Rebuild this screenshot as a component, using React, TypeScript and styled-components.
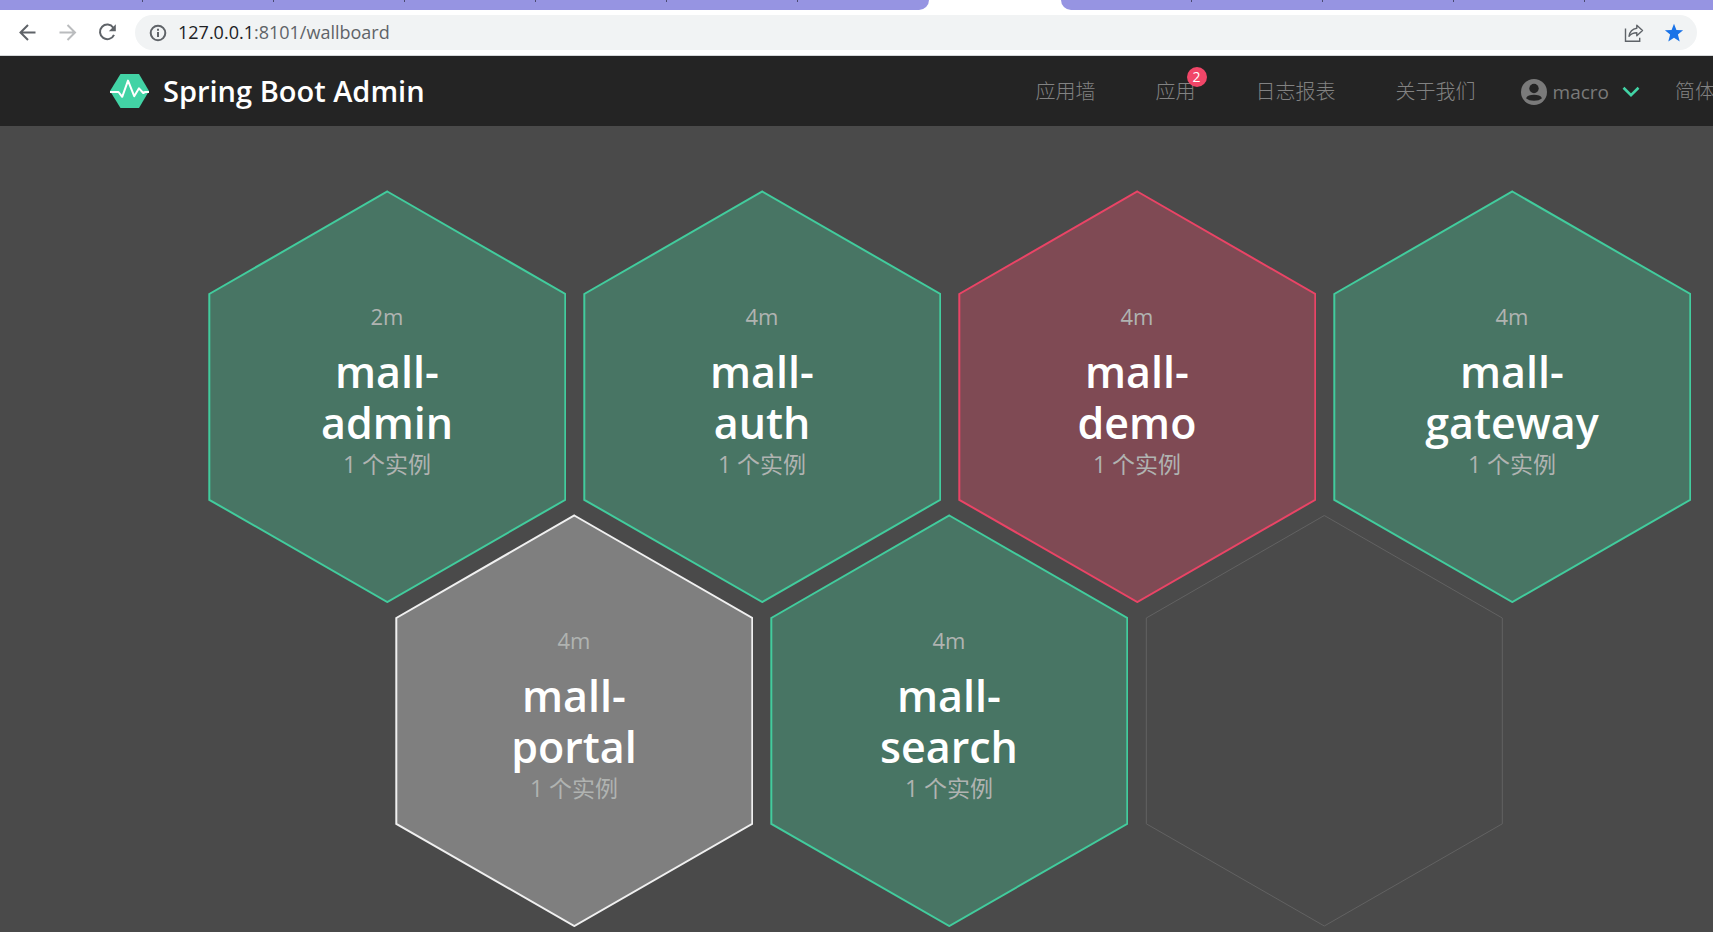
import React from "react";
import styled, { createGlobalStyle } from "styled-components";

const GlobalStyle = createGlobalStyle`
  *, *::before, *::after { box-sizing: border-box; }
  html, body, #root { min-height: 100vh; }
  body {
    margin: 0;
    background: #4a4a4a;
    font-family: "Open Sans", "Noto Sans CJK SC", sans-serif;
    overflow: hidden;
  }
  a { color: inherit; text-decoration: none; }
  button { border: 0; padding: 0; background: none; font: inherit; color: inherit; cursor: pointer; }
`;

const Page = styled.div`
  display: flex;
  flex-direction: column;
  min-height: 100vh;
  overflow: hidden;
`;

/* Browser chrome */
const TabStrip = styled.div`
  display: flex;
  height: 10px;
  background: #fff;
`;

const TabGroup = styled.div<{ $side: "left" | "right" }>`
  display: flex;
  overflow: hidden;
  background: #9694e2;
  flex: ${(p) => (p.$side === "left" ? "0 0 929px" : "1 1 0")};
  justify-content: ${(p) => (p.$side === "left" ? "flex-end" : "flex-start")};
  border-radius: ${(p) => (p.$side === "left" ? "0 0 10px 0" : "0 0 0 10px")};
`;

const ActiveTab = styled.div`
  flex: 0 0 132px;
`;

const Tab = styled.div<{ $divider: boolean }>`
  flex: 0 0 131px;
  height: 2px;
  border-right: 1px solid ${(p) => (p.$divider ? "#4b4a72" : "transparent")};
`;

const Toolbar = styled.div`
  display: flex;
  align-items: center;
  height: 46px;
  padding: 0 16px 0 15px;
  background: #fff;
  border-bottom: 1px solid #d5d8da;
`;

const ToolButton = styled.button<{ $muted?: boolean }>`
  display: flex;
  width: 24px;
  height: 24px;
  margin-right: 16px;
  color: ${(p) => (p.$muted ? "#babcbe" : "#5f6368")};
`;

const AddressBar = styled.div`
  display: flex;
  align-items: center;
  flex: 1;
  height: 35px;
  padding: 0 11px 0 14px;
  border-radius: 18px;
  background: #f1f3f4;
`;

const Address = styled.div`
  flex: 1;
  margin-left: 11px;
  padding-bottom: 2px;
  font-size: 18px;
  line-height: 24px;
  color: #5f6368;
`;

const Host = styled.span`
  color: #202124;
`;

const BarButton = styled.button`
  display: flex;
  margin-left: 16px;
  color: #5f6368;
`;

/* Application header */
const Header = styled.header`
  display: flex;
  align-items: center;
  height: 70px;
  padding-left: 110px;
  background: #242424;
`;

const Brand = styled.a`
  display: flex;
  align-items: center;
  gap: 14px;
  color: #fff;
  font-size: 29px;
  font-weight: 600;
  line-height: 40px;
  white-space: nowrap;
`;

const Nav = styled.nav`
  display: flex;
  align-items: center;
  margin-left: auto;
  padding-top: 2px;
  color: #828282;
  font-size: 20px;
  line-height: 30px;
  font-weight: 300;
  white-space: nowrap;
`;

const NavLink = styled.a`
  position: relative;
  margin-right: 60px;
`;

const Badge = styled.span`
  position: absolute;
  top: -10px;
  right: -11px;
  width: 20px;
  height: 20px;
  border-radius: 50%;
  background: #f14668;
  color: #fff;
  font-size: 14px;
  font-weight: 400;
  line-height: 20px;
  text-align: center;
`;

const UserMenu = styled.button`
  display: flex;
  align-items: center;
  gap: 6px;
  margin: 0 35px 0 -15px;
  color: #7a7a7a;
  font-size: 19px;
  font-weight: 400;
`;

const Chevron = styled.svg`
  margin-left: 7px;
`;

const Language = styled.a`
  width: 38px;
`;

/* Wallboard */
const Wallboard = styled.main`
  flex: 1;
  padding: 64px 0 0 208px;
`;

const HexRow = styled.div<{ $shifted?: boolean }>`
  display: flex;
  gap: 17px;
  margin-top: ${(p) => (p.$shifted ? "-89px" : "0")};
  padding-left: ${(p) => (p.$shifted ? "187px" : "0")};
`;

const Hex = styled.div`
  display: grid;
  flex: 0 0 358px;
  height: 413px;
  > * { grid-area: 1 / 1; }
`;

const HexLink = styled.a`
  display: flex;
  flex-direction: column;
  align-items: center;
  padding-top: 110px;
  text-align: center;
  color: #b0b3b1;
`;

const Uptime = styled.span`
  font-size: 22px;
  line-height: 32px;
`;

const AppName = styled.h2`
  width: 200px;
  margin: 14px 0 0;
  color: #fff;
  font-size: 43px;
  font-weight: 600;
  line-height: 51px;
`;

const Instances = styled.span`
  font-size: 23px;
  line-height: 32px;
  font-weight: 400;
`;

type Status = "up" | "down" | "unknown" | "empty";

const hexColors: Record<Status, { fill: string; stroke: string; width: number }> = {
  up: { fill: "#487564", stroke: "#42cc9d", width: 2 },
  down: { fill: "#7f4a54", stroke: "#ea4466", width: 2 },
  unknown: { fill: "#7f7f7f", stroke: "#f0f0f0", width: 2 },
  empty: { fill: "none", stroke: "#626262", width: 1 },
};

const HexShape = ({ status }: { status: Status }) => {
  const c = hexColors[status];
  return (
    <svg width="358" height="413" viewBox="0 0 358 413" aria-hidden="true">
      <polygon
        points="179.3,1.5 357.3,104 357.3,309.800 179.3,412 1.3,309.800 1.3,104"
        fill={c.fill}
        stroke={c.stroke}
        strokeWidth={c.width}
      />
    </svg>
  );
};

interface AppEntry {
  name?: string;
  uptime?: string;
  status: Status;
}

const rows: AppEntry[][] = [
  [
    { name: "admin", uptime: "2m", status: "up" },
    { name: "auth", uptime: "4m", status: "up" },
    { name: "demo", uptime: "4m", status: "down" },
    { name: "gateway", uptime: "4m", status: "up" },
  ],
  [
    { name: "portal", uptime: "4m", status: "unknown" },
    { name: "search", uptime: "4m", status: "up" },
    { status: "empty" },
  ],
];

const HexTile = ({ name, uptime, status }: AppEntry) => (
  <Hex>
    <HexShape status={status} />
    {name && (
      <HexLink href={`#mall-${name}`}>
        <Uptime>{uptime}</Uptime>
        <AppName>
          mall-
          <br />
          {name}
        </AppName>
        <Instances>1 个实例</Instances>
      </HexLink>
    )}
  </Hex>
);

const Arrow = ({ back }: { back?: boolean }) => (
  <svg width="24" height="24" viewBox="0 0 24 24" fill="none" stroke="currentColor" strokeWidth="2">
    <path d={back ? "M20.500 11.500H6M13 4 5.500 11.500l7.500 7.500" : "M4.500 11.500H19M12.500 4 20 11.500l-7.500 7.500"} />
  </svg>
);

export default function App() {
  return (
    <Page>
      <GlobalStyle />
      <TabStrip>
        <TabGroup $side="left">
          {[0, 1, 2, 3, 4, 5, 6].map((i) => (
            <Tab key={i} $divider={i < 6} />
          ))}
        </TabGroup>
        <ActiveTab />
        <TabGroup $side="right">
          {[0, 1, 2, 3].map((i) => (
            <Tab key={i} $divider />
          ))}
        </TabGroup>
      </TabStrip>
      <Toolbar>
        <ToolButton aria-label="Back">
          <Arrow back />
        </ToolButton>
        <ToolButton aria-label="Forward" $muted>
          <Arrow />
        </ToolButton>
        <ToolButton aria-label="Reload">
          <svg width="24" height="24" viewBox="0 0 24 24" fill="none">
            <path d="M18.300 6.700A7.300 7.300 0 1 0 19 13.800" stroke="currentColor" strokeWidth="2" />
            <path d="M20.800 3.300v7h-7z" fill="currentColor" />
          </svg>
        </ToolButton>
        <AddressBar>
          <svg width="18" height="18" viewBox="0 0 18 18" fill="none" stroke="#5f6368" strokeWidth="2">
            <circle cx="9" cy="9" r="7.300" />
            <path d="M9 8v5M9 4.800v2" />
          </svg>
          <Address>
            <Host>127.0.0.1</Host>:8101/wallboard
          </Address>
          <BarButton aria-label="Share">
            <svg width="24" height="24" viewBox="0 0 24 24" fill="none" stroke="currentColor" strokeWidth="1.400">
              <path d="M3.500 7.500v12.800h14.200v-3.500" />
              <path d="M14.800 4.200 20.500 9.500l-5.700 5.200v-3c-3.500 0-5.800 1-7.800 3.600.7-4.600 3.300-7.500 7.800-8.100z" strokeLinejoin="round" />
            </svg>
          </BarButton>
          <BarButton aria-label="Bookmark">
            <svg width="24" height="24" viewBox="0 0 24 24" fill="#1a73e8">
              <path d="m12 2.700 2.400 6.200 6.700.4-5.200 4.200 1.800 6.900-5.700-3.700-5.700 3.700 1.800-6.900L2.900 9.300l6.700-.4z" />
            </svg>
          </BarButton>
        </AddressBar>
      </Toolbar>
      <Header>
        <Brand href="#home">
          <svg width="39" height="34" viewBox="0 0 39 34" aria-hidden="true">
            <path d="M10.500 0h18.500L39 17 29 34H10.500L0 17z" fill="#42d3a5" />
            <path
              d="M0 18h8.500l3.700 4.800L18 6.600l6.200 15.600 4.800-7.900 4.200 4.700 2-1H39"
              fill="none"
              stroke="#fff"
              strokeWidth="2"
              strokeLinejoin="round"
            />
          </svg>
          <span>Spring Boot Admin</span>
        </Brand>
        <Nav>
          <NavLink href="#wallboard">应用墙</NavLink>
          <NavLink href="#applications">
            应用<Badge>2</Badge>
          </NavLink>
          <NavLink href="#journal">日志报表</NavLink>
          <NavLink href="#about">关于我们</NavLink>
          <UserMenu>
            <svg width="26" height="26" viewBox="0 0 26 26" aria-hidden="true">
              <circle cx="13" cy="13" r="13" fill="#7a7a7a" />
              <circle cx="13" cy="9.500" r="4.700" fill="#242424" />
              <path d="M5 19.200c1.200-2.600 4-3.500 8-3.500s6.800.9 8 3.500c-2 1.700-4.500 2.500-8 2.500s-6-.8-8-2.500z" fill="#242424" />
            </svg>
            <span>macro</span>
            <Chevron width="18" height="12" viewBox="0 0 18 12" aria-hidden="true">
              <path d="m1.500 1.800 7.500 7.400 7.500-7.400" fill="none" stroke="#42d3a5" strokeWidth="2.600" />
            </Chevron>
          </UserMenu>
          <Language href="#language">简体</Language>
        </Nav>
      </Header>
      <Wallboard>
        {rows.map((row, r) => (
          <HexRow key={r} $shifted={r % 2 === 1}>
            {row.map((app, i) => (
              <HexTile key={i} {...app} />
            ))}
          </HexRow>
        ))}
      </Wallboard>
    </Page>
  );
}
